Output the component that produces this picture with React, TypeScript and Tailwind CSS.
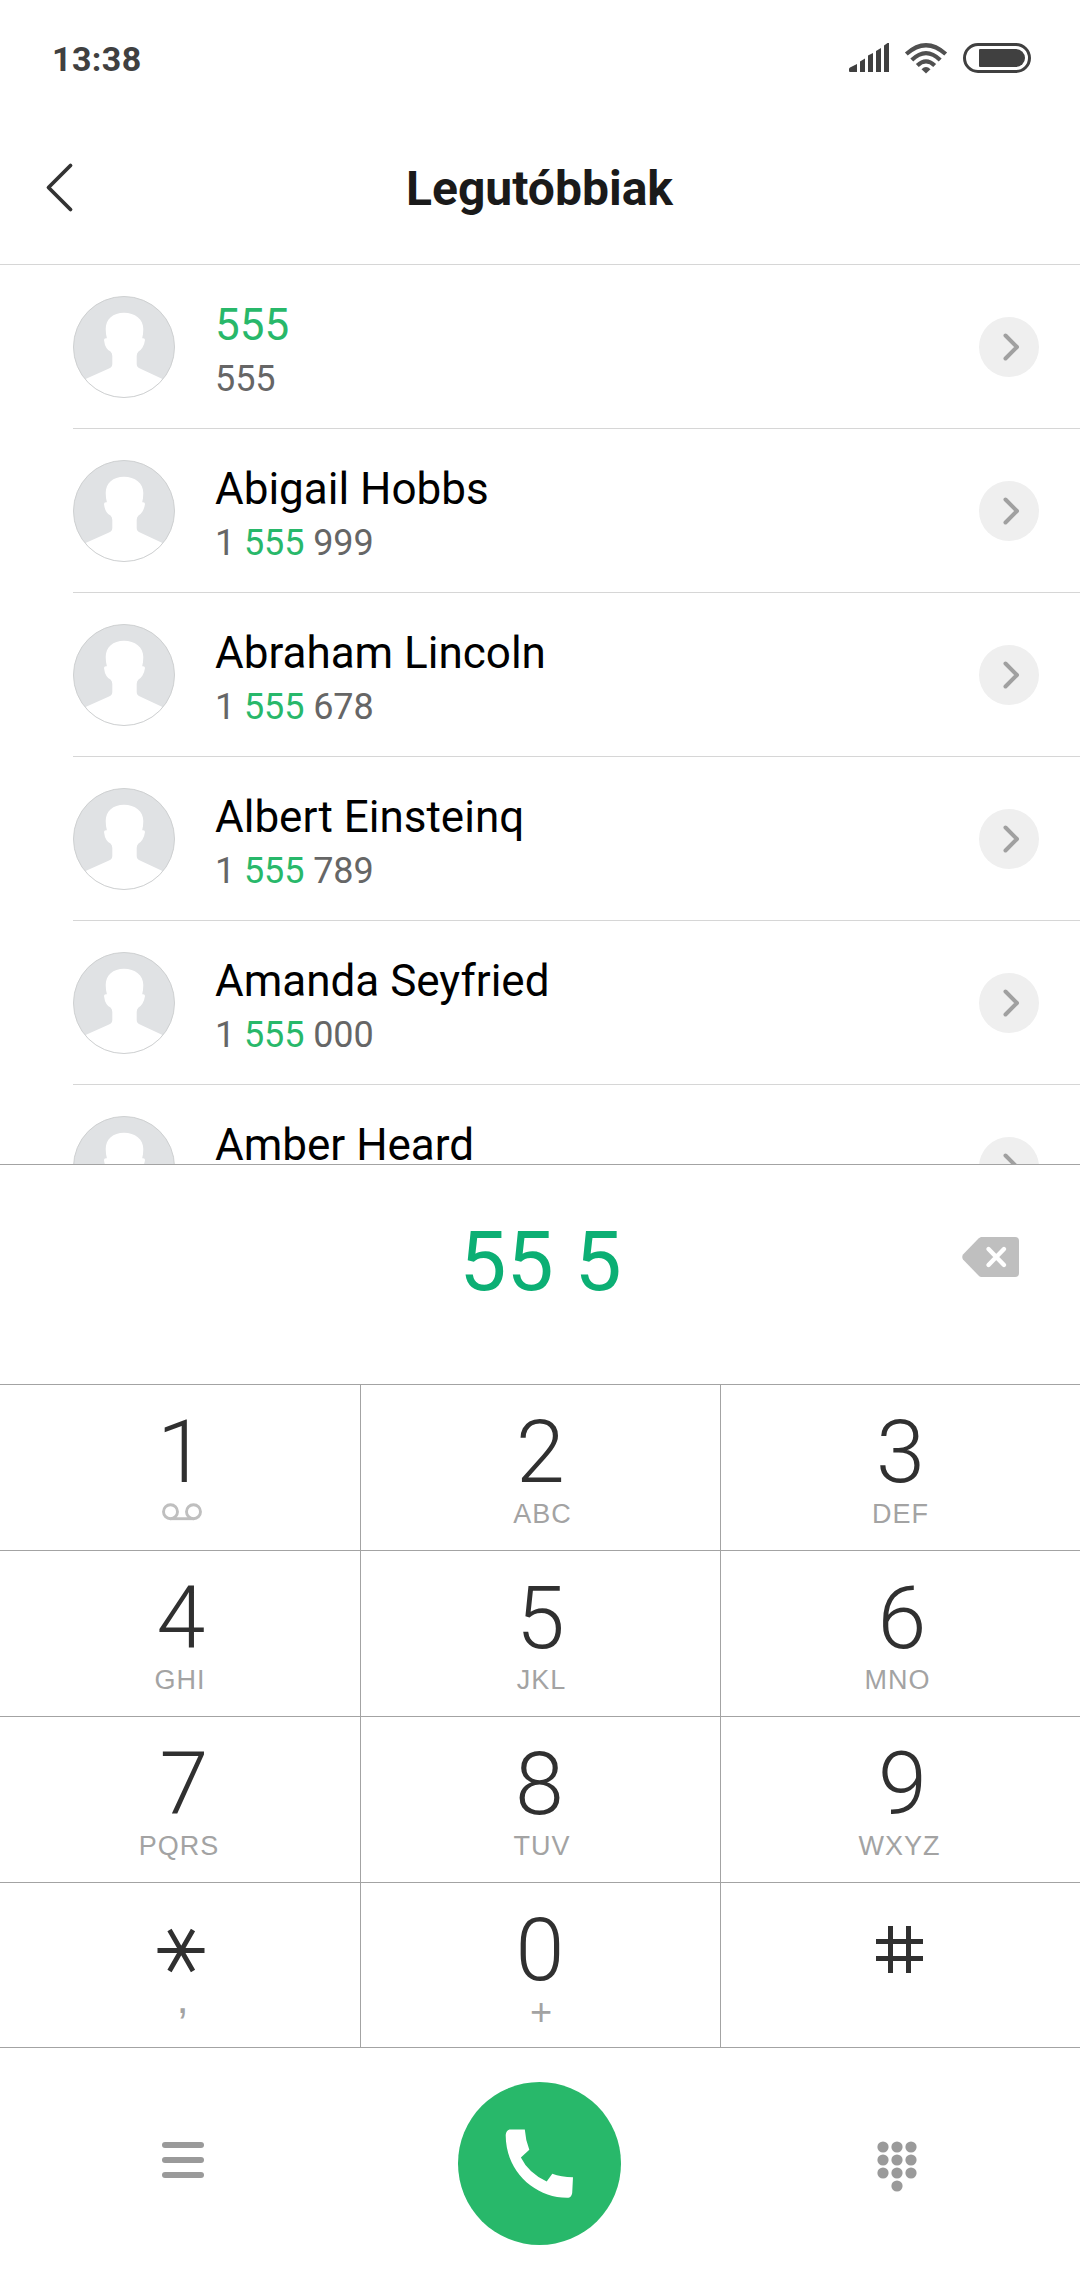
import type { ReactNode } from "react";

const contacts = [
  { name: "555", number: ["", "", "555"], hit: true },
  { name: "Abigail Hobbs", number: ["1 ", "555", " 999"] },
  { name: "Abraham Lincoln", number: ["1 ", "555", " 678"] },
  { name: "Albert Einsteinq", number: ["1 ", "555", " 789"] },
  { name: "Amanda Seyfried", number: ["1 ", "555", " 000"] },
  { name: "Amber Heard" },
];

function StatusBar() {
  return (
    <div className="flex h-[104px] items-start justify-between pt-[39px] pr-[48px] pl-[52px]">
      <span className="text-[34px] leading-[40px] font-bold tracking-[0.4px] text-[#404040]">13:38</span>
      <svg className="mt-[3px]" width={184} height={32} viewBox="848 42 184 32" fill="none">
        <g fill="#404040">
          <path d="M849 71V69Q849 68 850 67.500L857 64V72H850Q849 72 849 71Z" />
          <path d="M860 61.500L865 58.500V72H860Z" />
          <path d="M868 55.500L873 53V72H868Z" />
          <path d="M876 51L881 48V72H876Z" />
          <path d="M884 45.500L887.500 43H889V72H884Z" />
        </g>
        <g stroke="#505050" strokeWidth={4.200}>
          <path d="M906.300 54Q926 36.400 945.700 54" />
          <path d="M911.800 60Q926 46.200 940.200 60" />
          <path d="M917.300 65.500Q926 57.300 934.700 65.500" />
        </g>
        <path d="M921.500 69.300Q926 64.500 930.500 69.300L926 73.500Z" fill="#505050" />
        <rect x={964.500} y={44.500} width={65} height={27} rx={13.500} stroke="#404040" strokeWidth={3} />
        <path d="M980 49H1016A9 9 0 0 1 1016 67H980Q979 67 979 66V50Q979 49 980 49Z" fill="#404040" />
      </svg>
    </div>
  );
}

function Header() {
  return (
    <header className="grid h-[161px] grid-cols-[1fr_auto_1fr] items-start border-b border-[#d6d6d6] pt-[57px] pr-px">
      <svg className="mt-[1px] ml-[44px]" width={32} height={52} viewBox="44 162 32 52" fill="none">
        <path
          d="M70.500 165.500L48.500 187.500L70.500 209.500"
          stroke="#333"
          strokeWidth={3.800}
          strokeLinecap="round"
          strokeLinejoin="round"
        />
      </svg>
      <h1 className="text-[48px] leading-[56px] font-bold text-[#1a1a1a]">Legutóbbiak</h1>
    </header>
  );
}

function Avatar() {
  return (
    <svg className="mt-[31px]" width={102} height={102} viewBox="0 0 102 102">
      <defs>
        <clipPath id="face">
          <circle cx={51} cy={51} r={50.500} />
        </clipPath>
      </defs>
      <circle cx={51} cy={51} r={50.500} fill="#e0e2e4" />
      <path
        clipPath="url(#face)"
        fill="#fff"
        d="M51 16.700C40 16.700 32.700 23 32.700 33Q32.700 38 33.900 42.300Q31 41.800 31 44Q31.500 49 33.500 52Q35 54.500 37.500 55.500Q39.300 57 39.300 60V68Q39.300 71 36 72.500L12.500 83L14 102H88L89.500 83L67 72.500Q63.700 71 63.700 68V60Q63.700 57 65.500 55.500Q68 54 69.500 51.500Q71.500 48 72 44Q72 41.800 69.200 42.300Q70.300 38 70.300 33C70.300 23 62 16.700 51 16.700Z"
      />
      <circle cx={51} cy={51} r={50.500} fill="none" stroke="#ced0d1" />
    </svg>
  );
}

function ContactRow({ name, number, hit }: { name: string; number?: string[]; hit?: boolean }) {
  return (
    <li className="ml-[73px] flex h-[164px] shrink-0 items-start border-b border-[#d6d6d6] pr-[41px]">
      <Avatar />
      <div className="ml-[40px] grow pt-[37px] whitespace-pre">
        <p className={hit ? "text-[44px] leading-[46px] text-[#28b86a]" : "text-[44px] leading-[46px] text-black"}>
          {name}
        </p>
        {number && (
          <p className="mt-[10px] text-[36px] leading-[42px] tracking-[-0.1px] text-[#666]">
            {number[0]}
            <span className="text-[#28b86a]">{number[1]}</span>
            {number[2]}
          </p>
        )}
      </div>
      <svg className="mt-[52px]" width={60} height={60} viewBox="0 0 60 60" fill="none">
        <circle cx={30} cy={30} r={30} fill="#efefef" />
        <path
          d="M26.500 18.500L38 30L26.500 41.500"
          stroke="#a0a0a0"
          strokeWidth={4}
          strokeLinecap="round"
          strokeLinejoin="round"
        />
      </svg>
    </li>
  );
}

function NumberField() {
  return (
    <div className="grid h-[220px] grid-cols-[1fr_auto_1fr] items-start border-t border-[#a3a3a3] pt-[49px]">
      <span />
      <span className="pl-px text-[84px] leading-[96px] text-[#0caf74]">55 5</span>
      <svg className="mt-[23px] mr-[61px] justify-self-end" width={57} height={40} viewBox="0 0 57 40">
        <path
          d="M19 0H53Q57 0 57 4V36Q57 40 53 40H19Q17.500 39.500 16.500 38.500L1 22.500Q-0.500 20 1 17.500L16.500 1.500Q17.500 0.500 19 0Z"
          fill="#bfbfbf"
        />
        <path d="M26.500 12L42 28M42 12L26.500 28" stroke="#fff" strokeWidth={4.400} strokeLinecap="round" />
      </svg>
    </div>
  );
}

// nudge and subNudge are the optical side paddings of the digit and its letters
function Key({
  digit,
  children,
  nudge = "",
  subNudge = "",
}: {
  digit: ReactNode;
  children?: ReactNode;
  nudge?: string;
  subNudge?: string;
}) {
  return (
    <button className="flex flex-col items-center border-t border-l border-[#a3a3a3] pt-[23px]">
      <span className={`flex h-[88px] items-center text-[88px] leading-[88px] font-light text-[#303030] ${nudge}`}>
        {digit}
      </span>
      <span
        className={`mt-[3px] h-[30px] font-['Liberation_Sans',sans-serif] text-[27px] leading-[31px] tracking-[1px] text-[#a3a3a3] ${subNudge}`}
      >
        {children}
      </span>
    </button>
  );
}

function Voicemail() {
  return (
    <svg className="mt-[4px]" width={40} height={18} viewBox="0 0 40 18" fill="none" stroke="#bfbfbf" strokeWidth={2.900}>
      <circle cx={8.500} cy={8.700} r={7} />
      <circle cx={31.500} cy={8.700} r={7} />
      <path d="M8.500 15.700H31.500" />
    </svg>
  );
}

function Star() {
  return (
    <svg aria-label="*" width={48} height={48} viewBox="0 0 48 48" stroke="#303030" strokeWidth={4.800}>
      <path d="M0.500 24.500H47.500M12.500 4L36 45M36 4L12.500 45" />
    </svg>
  );
}

function Pound() {
  return (
    <svg aria-label="#" width={47} height={48} viewBox="0 0 47 48" stroke="#303030" strokeWidth={5}>
      <path d="M0 15.500H47M0 32.500H47M14.500 0V47M32.500 0V47" />
    </svg>
  );
}

function Keypad() {
  return (
    <div className="-ml-px grid h-[664px] grid-cols-[361px_360px_360px] grid-rows-[166px_166px_166px_165px] border-b border-[#a3a3a3]">
      <Key digit="1" nudge="pl-[3px]" subNudge="pl-[4px]"><Voicemail /></Key>
      <Key digit="2" subNudge="pl-[4px]">ABC</Key>
      <Key digit="3">DEF</Key>
      <Key digit="4" nudge="pl-[2px]">GHI</Key>
      <Key digit="5" subNudge="pl-[2px]">JKL</Key>
      <Key digit="6" nudge="pl-[3px]" subNudge="pr-[6px]">MNO</Key>
      <Key digit="7" nudge="pl-[8px]" subNudge="pr-[2px]">PQRS</Key>
      <Key digit="8" nudge="pr-[2px]" subNudge="pl-[3px]">TUV</Key>
      <Key digit="9" nudge="pl-[4px]" subNudge="pr-[2px]">WXYZ</Key>
      <Key digit={<Star />} nudge="pl-[2px]" subNudge="pl-[6px]">
        <span className="block text-[44px] leading-[2px]">,</span>
      </Key>
      <Key digit="0" nudge="pr-[1px]" subNudge="pl-[2px]">
        <span className="block text-[38px] leading-[30px]">+</span>
      </Key>
      <Key digit={<Pound />} nudge="pr-[2px]" />
    </div>
  );
}

const dots = [
  [6, 6], [20, 6], [34, 6],
  [6, 19], [20, 19], [34, 19],
  [6, 32], [20, 32], [34, 32],
  [20, 45],
];

function Toolbar() {
  return (
    <div className="grid grow grid-cols-[1fr_163px_1fr] items-start pt-[34px] pr-[163px] pl-[162px]">
      <div className="mt-[60px] flex w-[42px] flex-col gap-[9px]">
        <span className="h-[6px] rounded-full bg-[#9a9a9a]"></span>
        <span className="h-[6px] rounded-full bg-[#9a9a9a]"></span>
        <span className="h-[6px] rounded-full bg-[#9a9a9a]"></span>
      </div>
      <svg width={163} height={163} viewBox="458 2082 163 163">
        <circle cx={539.500} cy={2163.500} r={81.500} fill="#28b86a" />
        <path
          d="M509.500 2129.500H524.800Q525.500 2140 529.300 2149.700L520.900 2157.500Q528.500 2173 546.700 2181.500L552.300 2173.700Q561 2177 573 2177.300L572.200 2193Q571.500 2197 568.500 2197.700C536 2198.500 505.500 2172 505.700 2135Q506 2130.500 509.500 2129.500Z"
          fill="#fff"
        />
      </svg>
      <svg className="mt-[59px] justify-self-end" width={40} height={51} viewBox="0 0 40 51" fill="#9a9a9a">
        {dots.map(([x, y]) => (
          <circle key={`${x}-${y}`} cx={x} cy={y} r={5.600} />
        ))}
      </svg>
    </div>
  );
}

export default function App() {
  return (
    <div className="flex h-[2280px] w-[1080px] flex-col overflow-hidden bg-white font-['Roboto',sans-serif]">
      <StatusBar />
      <Header />
      <ul className="flex h-[899px] flex-col overflow-hidden">
        {contacts.map((c) => (
          <ContactRow key={c.name} {...c} />
        ))}
      </ul>
      <NumberField />
      <Keypad />
      <Toolbar />
    </div>
  );
}
